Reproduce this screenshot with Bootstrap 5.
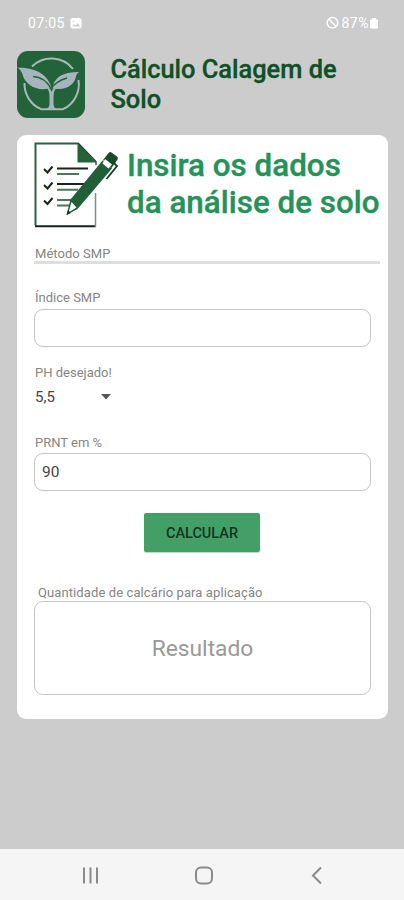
<!DOCTYPE html>
<html lang="pt-BR">
<head>
<meta charset="utf-8">
<meta name="viewport" content="width=device-width, initial-scale=1">
<title>Cálculo Calagem de Solo</title>
<link href="https://cdn.jsdelivr.net/npm/bootstrap@5.3.0/dist/css/bootstrap.min.css" rel="stylesheet">
<style>
body{font-family:Roboto,sans-serif;background:#ccc;height:900px;overflow:hidden}
svg{display:block;flex:none}
.status{height:51px;padding:14px 25px 0 28px;color:#fff;font-size:14px;line-height:18px}
.status .clock{letter-spacing:.35px}
.status .charge{letter-spacing:.5px;margin-left:-1px}
.app-head{height:84px;padding-left:17px;gap:25.5px}
.app-head h1{font-size:25.4px;line-height:30px;font-weight:500;color:#0e5128;margin:3px 0 0;width:250px;-webkit-text-stroke:.35px #0e5128}
.panel{width:371px;height:584px;margin-left:17px;border:0;border-radius:9px;background:#fff;padding:0 17px}
.intro{height:107px;gap:9px;padding-top:6px}
.intro h2{font-size:31.4px;line-height:37px;font-weight:500;color:#259359;margin:6px 0 0;white-space:nowrap;-webkit-text-stroke:.4px #259359}
.caption-s{font-size:13px;line-height:16px;color:#858585;display:block;margin:0 0 0 1px}
.method{height:22px;width:346px;border-bottom:3px solid #dedede;padding-top:4px}
.method .caption-s{letter-spacing:.05px}
.box{width:337px;height:38px;border:1.5px solid #c6c6c6;border-radius:9px;padding:0 7px;font-size:15.5px;color:#444;box-shadow:none}
.ph{width:77px;font-size:15px;line-height:20px;color:#444;margin:6px 0 0 1px}
.btn-calc{width:116px;height:39px;margin:22px 0 0 110px;padding:2px 0 0;border:0;border-radius:2px;background:#439f66;color:#12351f;font-size:14.5px;font-weight:500;box-shadow:0 1px 1px #0003}
.btn-calc:hover{background:#3b915c;color:#12351f}
.qty{letter-spacing:.1px}
.result{height:94px;font-size:22.8px;color:#999;padding-top:2px}
.navkeys{height:51px;background:#f5f5f5;margin-top:auto}
</style>
<script src="https://cdn.jsdelivr.net/npm/bootstrap@5.3.0/dist/js/bootstrap.bundle.min.js"></script>
</head>
<body class="d-flex flex-column">
<div class="status d-flex justify-content-between">
  <div class="d-flex">
    <span class="clock">07:05</span>
    <svg class="mt-1 ms-1" width="13" height="11" viewBox="0 0 13 11"><rect x="1.500" width="11" height="10.500" rx="2" fill="#fff"/><path d="M3.500 8.500 5.500 6 7 7.500 9 5l2 3.500z" fill="#ccc"/><circle cx="4.500" cy="3.300" r=".8" fill="#ccc"/></svg>
  </div>
  <div class="d-flex">
    <svg class="me-1" width="13" height="18" viewBox="0 0 13 18" fill="none" stroke="#fff" stroke-width="1.500"><circle cx="6.500" cy="8.800" r="5.300"/><path d="m3 5.300 7 7"/></svg>
    <span class="charge">87%</span>
    <svg width="10" height="18" viewBox="0 0 10 18"><path d="M3 4h4v1.500h1q1 0 1 1v7q0 1-1 1H2q-1 0-1-1v-7q0-1 1-1h1z" fill="#fff"/></svg>
  </div>
</div>
<header class="app-head d-flex align-items-start">
  <svg width="68" height="68" viewBox="0 0 68 68">
    <rect width="68" height="67" rx="11" fill="#22633a"/>
    <path d="M15 15.500A27.500 27.500 0 0 1 56 18M7.500 32A27.500 27.500 0 0 0 24 58.200H46A27.500 27.500 0 0 0 61.500 29" fill="none" stroke="#a9b9b8" stroke-width="2"/>
    <path d="M0 16.500C14 17 30 20 34.500 37 20 41 9 34 6 25Q4 18 0 16.500z" fill="#a6b4bb"/>
    <path d="M62 21C48 21 37 25 35.500 37.500 50 40 58 33 59 25Q60 22 62 21z" fill="#a6b4bb"/>
    <path d="M16 25.500C24 26 30 30 34 37.500 38 32 43 29 50 27" fill="none" stroke="#22633a" stroke-width="1.500"/>
    <path d="M29 36q5 1 5.500 5 1-4 6-5-4 3-4 9v8q0 4 4 5.500H28.500q4-1.500 4-5.500v-8q0-6-3.500-9z" fill="#a6b4bb"/>
  </svg>
  <h1>Cálculo Calagem de Solo</h1>
</header>
<main class="card panel">
  <div class="intro d-flex align-items-start">
    <svg width="84" height="88" viewBox="0 0 84 88">
      <path d="M44 2.500H1.500v82" fill="none" stroke="#2b6145" stroke-width="2"/>
      <path d="M1 85.200h61" stroke="#10261b" stroke-width="2"/>
      <path d="M61.500 86V52" stroke="#789386" stroke-width="1.500"/>
      <path d="M43.500 2l18.500 19.500H43.500z" fill="#22633a"/><path d="m44 2 18 18.500V24" fill="none" stroke="#123e24" stroke-width="1.300"/>
      <g fill="none" stroke="#17251d" stroke-width="2"><path d="m10 28 3.500 3.500 5-6M10 44l3.500 3.500 5-6M10 59.500l3.500 3.500 5-6"/><path d="M23 27.500h31M23 43h27"/></g>
      <path d="M23 33h22M23 48.800h21M23 59h15M23 64.500h14" stroke="#4c775f" stroke-width="1.900"/>
      <path d="M32.500 74 36.500 58.500 68.500 19.500 78 27.500 43.500 68z" fill="#205f38"/>
      <path d="m37.500 61 5 5.500-8 5z" fill="#fff"/><path d="m32.500 74 1.500-5 3 3z" fill="#123e24"/>
      <path d="m69 19 6-7.500q1-1.200 2.500 0l5.500 4q1.500 1.500.5 3L77.500 27z" fill="#174b2c"/>
      <path d="m71 18 7 5.500-3.500 4-6-5z" fill="#fff"/>
      <path d="m79.500 21.500 3.500 3.500-10.500 13" fill="none" stroke="#173b26" stroke-width="1.800"/>
    </svg>
    <h2>Insira os dados<br>da análise de solo</h2>
  </div>
  <div class="method"><span class="caption-s">Método SMP</span></div>
  <label class="caption-s" for="smp" style="margin-top:26px">Índice SMP</label>
  <input class="form-control box" id="smp" type="text" style="margin-top:3px">
  <span class="caption-s" style="margin-top:18px">PH desejado!</span>
  <div class="ph d-flex align-items-center justify-content-between" role="button"><span>5,5</span><svg width="12" height="6" viewBox="0 0 12 6"><path d="M1 0h10L6 5.500z" fill="#555"/></svg></div>
  <label class="caption-s" for="prnt" style="margin-top:28px">PRNT em %</label>
  <input class="form-control box" id="prnt" type="text" value="90" style="margin-top:2px">
  <button class="btn btn-calc" type="button">CALCULAR</button>
  <span class="caption-s qty" style="margin:33px 0 0 4px">Quantidade de calcário para aplicação</span>
  <output class="box result d-flex align-items-center justify-content-center">Resultado</output>
</main>
<nav class="navkeys">
  <svg width="404" height="51" viewBox="0 0 404 51" fill="none" stroke="#8a8a8a" stroke-width="2"><path d="M84 18.500v16M90.500 18.500v16M97 18.500v16"/><rect x="196" y="18.500" width="16" height="16" rx="5"/><path d="m321 18.500-8 8 8 8"/></svg>
</nav>
</body>
</html>
